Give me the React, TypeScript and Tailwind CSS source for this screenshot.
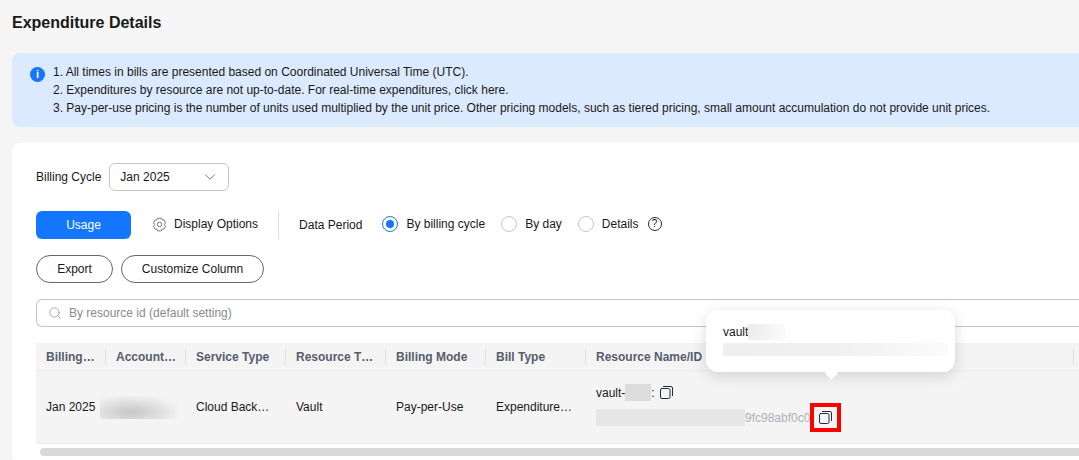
import { Search, ChevronDown } from "lucide-react"

const COLUMNS = [
  { label: "Billing…", width: "w-[70px]" },
  { label: "Account…", width: "w-[80px]" },
  { label: "Service Type", width: "w-[100px]" },
  { label: "Resource T…", width: "w-[100px]" },
  { label: "Billing Mode", width: "w-[100px]" },
  { label: "Bill Type", width: "w-[100px]" },
]

function CopyIcon() {
  return (
    <svg width="13" height="13" viewBox="0 0 13 13" fill="none" stroke="#252b3a" strokeWidth="1">
      <rect x="0.5" y="2.5" width="9.5" height="10" rx="1.5" />
      <path d="M3 0.5h8A1.5 1.5 0 0 1 12.5 2v8" />
    </svg>
  )
}

function GearIcon() {
  return (
    <svg width="15" height="15" viewBox="0 0 15 15" fill="none" stroke="#757575" strokeWidth="1" strokeLinejoin="round">
      <path d="M5.6 1.2h3.8l.7 1.6 1.8.2 1.6 2.6-1 1.9 1 1.9-1.6 2.6-1.8.2-.7 1.6H5.6l-.7-1.6-1.8-.2-1.6-2.6 1-1.9-1-1.9L3.100 3l1.800-.2z" />
      <circle cx="7.500" cy="7.500" r="2.200" />
    </svg>
  )
}

function Radio({ label, checked }: { label: string; checked?: boolean }) {
  return (
    <div className="flex items-center gap-2">
      {checked ? (
        <span className="flex size-4 items-center justify-center rounded-full border border-[#1476ff]">
          <span className="size-2 rounded-full bg-[#1476ff]" />
        </span>
      ) : (
        <span className="size-4 rounded-full border border-[#c7c7c7]" />
      )}
      <span>{label}</span>
    </div>
  )
}

export default function App() {
  return (
    <div className="relative h-[460px] w-[1079px] overflow-hidden bg-[#f5f5f5] font-['Liberation_Sans',Arial,sans-serif] text-xs text-[#191919]">
      <h1 className="px-3 pt-[14px] text-base leading-[18px] font-bold">Expenditure Details</h1>

      {/* Notice */}
      <div className="mt-[21px] ml-3 flex h-[74px] w-[1100px] rounded-l-lg bg-[#dbeafe] pt-[10px] pl-[18px]">
        <span className="mt-1 flex size-[15px] items-center justify-center rounded-full bg-[#1476ff] text-[11px] leading-none font-bold text-white">
          i
        </span>
        <div className="ml-2 leading-[18px]">
          <p>1. All times in bills are presented based on Coordinated Universal Time (UTC).</p>
          <p>2. Expenditures by resource are not up-to-date. For real-time expenditures, click here.</p>
          <p>
            3. Pay-per-use pricing is the number of units used multiplied by the unit price. Other pricing models, such
            as tiered pricing, small amount accumulation do not provide unit prices.
          </p>
        </div>
      </div>

      {/* Main card */}
      <div className="mt-4 ml-3 h-[320px] w-[1100px] rounded-l-lg bg-white pt-5 pl-6">
        <div className="flex items-center gap-2">
          <span>Billing Cycle</span>
          <div className="flex h-7 w-[120px] items-center justify-between rounded-md border border-[#c7c7c7] pr-[9px] pl-[10px]">
            <span>Jan 2025</span>
            <ChevronDown size={18} strokeWidth={1.2} color="#666" />
          </div>
        </div>

        <div className="mt-5 flex h-7 items-center">
          <button className="h-7 w-[95px] rounded-md bg-[#1476ff] font-normal text-white">Usage</button>
          <span className="mb-[2px] ml-[21px]">
            <GearIcon />
          </span>
          <span className="mb-[3px] ml-[7px]">Display Options</span>
          <div className="mr-5 ml-5 h-7 w-px bg-[#dfdfdf]" />
          <span>Data Period</span>
          <div className="mb-[2px] ml-5 flex items-center gap-4">
            <Radio label="By billing cycle" checked />
            <Radio label="By day" />
            <div className="flex items-center gap-[9px]">
              <Radio label="Details" />
              <span className="flex size-[14px] items-center justify-center rounded-full border border-[#252b3a] text-[10px] leading-none">
                ?
              </span>
            </div>
          </div>
        </div>

        <div className="mt-4 flex gap-2">
          <button className="h-7 w-[77px] rounded-full border border-[#666]">Export</button>
          <button className="h-7 w-[143px] rounded-full border border-[#666]">Customize Column</button>
        </div>

        <div className="mt-4 flex h-7 items-center gap-[7px] rounded-l-md border border-r-0 border-[#c7c7c7] pl-[11px] text-[#8a8a8a]">
          <Search size={14} strokeWidth={1.2} color="#8a8a8a" />
          <span>By resource id (default setting)</span>
        </div>

        {/* Table */}
        <div className="mt-4 w-[1043px] bg-[#f4f4f4]">
          <div className="flex h-7 items-center border-b border-[#ececec] font-bold text-[#575d6c]">
            {COLUMNS.map((col) => (
              <div key={col.label} className={`${col.width} h-4 border-r border-[#dfdfdf] pl-[10px] leading-4`}>
                {col.label}
              </div>
            ))}
            <div className="h-4 flex-1 border-r border-[#dfdfdf] pl-[10px] leading-4">Resource Name/ID</div>
            <div className="w-[5px]" />
          </div>
          <div className="flex h-[73px] items-center border-b border-[#ececec]">
            <div className="w-[64px] pl-[10px]">Jan 2025</div>
            <div className="h-[23px] w-[78px] bg-[radial-gradient(ellipse_at_40%_70%,#c6c6c6,#f2f2f2_75%)]" />
            <div className="w-[108px] pl-[18px]">Cloud Back…</div>
            <div className="w-[100px] pl-[10px]">Vault</div>
            <div className="w-[100px] pl-[10px]">Pay-per-Use</div>
            <div className="w-[100px] pl-[10px]">Expenditure…</div>
            <div className="flex flex-col self-start pt-[13px] pl-[10px]">
              <div className="flex items-center">
                <span>vault-</span>
                <span className="h-[17px] w-[26px] bg-[#dcdcdc]" />
                <span>:</span>
                <span className="ml-[5px]">
                  <CopyIcon />
                </span>
              </div>
              <div className="mt-[2px] flex items-center text-[#adb0b8]">
                <span className="h-[17px] w-[149px] shrink-0 bg-[#e6e6e6]" />
                <span>9fc98abf0c0</span>
                <span className="flex h-[29px] w-[31px] shrink-0 items-center justify-center border-4 border-[#ff0000]">
                  <CopyIcon />
                </span>
              </div>
            </div>
          </div>
        </div>

        <div className="mt-1 ml-1 h-2 w-[1040px] rounded-l-full bg-[#d9d9d9]" />
      </div>

      {/* Tooltip */}
      <div className="absolute top-[310px] left-[706px] h-[62px] w-[249px] rounded-xl bg-white pt-[14px] pl-[17px] shadow-[0_4px_16px_rgba(0,0,0,0.14)]">
        <div className="flex h-4 items-center">
          <span>vault</span>
          <span className="h-4 w-[37px] bg-gradient-to-r from-[#ececec] to-[#fafafa]" />
        </div>
        <div className="mt-[3px] h-[13px] w-[225px] bg-gradient-to-r from-[#efeff1] via-[#f0f0f2] to-[#fbfbfb]" />
        <div className="absolute top-[59px] left-[121px] size-[9px] rotate-45 bg-white" />
      </div>
    </div>
  )
}
